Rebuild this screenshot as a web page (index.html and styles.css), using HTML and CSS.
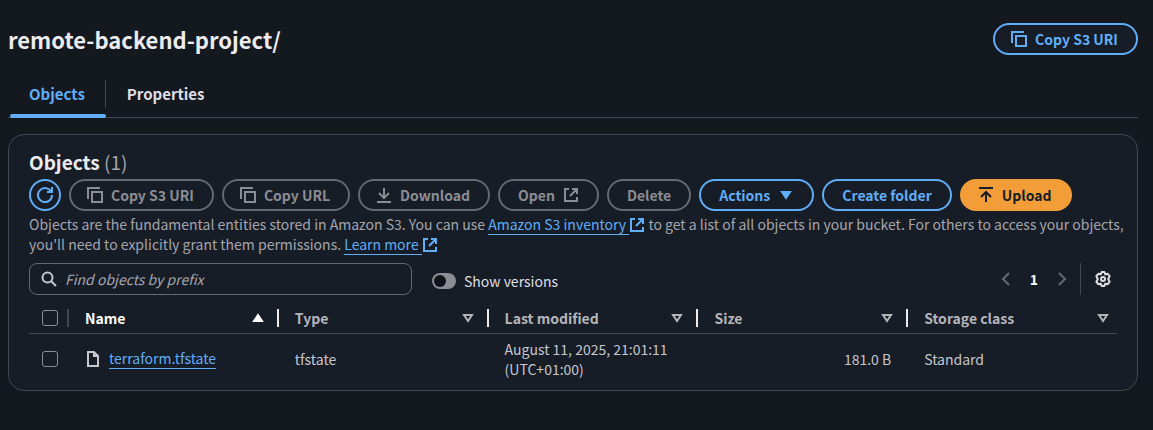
FILE: index.html
```html
<!DOCTYPE html>
<html lang="en">
<head>
<meta charset="utf-8">
<meta name="viewport" content="width=device-width, initial-scale=1">
<title>remote-backend-project/</title>
<link rel="stylesheet" href="styles.css">
</head>
<body>
<svg class="sprite" aria-hidden="true">
  <symbol id="i-copy" viewBox="0 0 16 16"><path d="M1 12V1h12M5 5h10v10H5z"/></symbol>
  <symbol id="i-external" viewBox="0 0 16 16"><path d="M6 2H2v12h12v-4M9 2h5v5M14 2 7 9"/></symbol>
</svg>
<main class="page">
  <header class="page-header">
    <h1 class="page-title">remote-backend-project/</h1>
    <button class="btn" type="button"><svg class="icon"><use href="#i-copy"/></svg>Copy S3 URI</button>
  </header>
  <nav class="tabs">
    <button class="tab tab-active" type="button">Objects</button>
    <button class="tab" type="button">Properties</button>
  </nav>
  <section class="panel">
    <h2 class="panel-title">Objects <span class="counter">(1)</span></h2>
    <div class="actions">
      <button class="btn btn-round" type="button" aria-label="Refresh"><svg class="icon" viewBox="0 0 16 16"><path d="M10 5h5V0M15 8a7 7 0 1 1-.7-3"/></svg></button>
      <button class="btn" type="button" disabled><svg class="icon"><use href="#i-copy"/></svg>Copy S3 URI</button>
      <button class="btn" type="button" disabled><svg class="icon"><use href="#i-copy"/></svg>Copy URL</button>
      <button class="btn" type="button" disabled><svg class="icon" viewBox="0 0 16 16"><path d="M1 15h14M8 1v10M3 6l5 5 5-5"/></svg>Download</button>
      <button class="btn btn-text" type="button" disabled>Open<svg class="icon"><use href="#i-external"/></svg></button>
      <button class="btn btn-text" type="button" disabled>Delete</button>
      <button class="btn btn-text" type="button">Actions<svg class="icon" viewBox="0 0 16 16"><path class="solid" d="M4 5h8l-4 6z"/></svg></button>
      <button class="btn btn-text" type="button">Create folder</button>
      <button class="btn btn-primary" type="button"><svg class="icon" viewBox="0 0 16 16"><path d="M1 1h14M8 15V5M3 10l5-5 5 5"/></svg>Upload</button>
    </div>
    <p class="description">Objects are the fundamental entities stored in Amazon S3. You can use <a class="link" href="#">Amazon S3 inventory </a><svg class="icon icon-link"><use href="#i-external"/></svg> to get a list of all objects in your bucket. For others to access your objects, you'll need to explicitly grant them permissions. <a class="link" href="#">Learn more </a><svg class="icon icon-link"><use href="#i-external"/></svg></p>
    <div class="filters">
      <label class="search">
        <svg class="icon" viewBox="0 0 16 16"><circle cx="6.500" cy="6.500" r="5"/><path d="m10.500 10.500 4.500 4.500"/></svg>
        <input class="search-input" type="search" placeholder="Find objects by prefix" aria-label="Find objects by prefix">
      </label>
      <label class="toggle"><input class="switch" type="checkbox" role="switch">Show versions</label>
      <div class="pager">
        <button class="icon-btn icon-btn-off" type="button" disabled aria-label="Previous page"><svg class="icon" viewBox="0 0 16 16"><path d="M11 2 5 8l6 6"/></svg></button>
        <button class="icon-btn page-number" type="button">1</button>
        <button class="icon-btn icon-btn-off" type="button" disabled aria-label="Next page"><svg class="icon" viewBox="0 0 16 16"><path d="m5 2 6 6-6 6"/></svg></button>
      </div>
      <button class="icon-btn settings" type="button" aria-label="Preferences"><svg class="icon" viewBox="0 0 16 16"><path stroke-linejoin="round" d="M6.600 1h2.800l.8 2.300 2.500-.5 1.900 2.400L13.200 8l1.400 2.800-1.900 2.400-2.500-.5L9.400 15H6.600l-.8-2.300-2.500.5-1.900-2.400L2.800 8 1.400 5.200l1.900-2.400 2.500.5z"/><circle cx="8" cy="8" r="2"/></svg></button>
    </div>
    <table class="objects">
      <thead>
        <tr>
          <th class="select" scope="col"><input class="check" type="checkbox" aria-label="Select all objects"></th>
          <th class="sorted" scope="col"><div class="head">Name<svg class="icon" viewBox="0 0 16 16"><path class="solid" d="M4 11h8L8 5z"/></svg></div></th>
          <th scope="col"><div class="head">Type<svg class="icon" viewBox="0 0 16 16"><path d="M4 5h8l-4 6z"/></svg></div></th>
          <th scope="col"><div class="head">Last modified<svg class="icon" viewBox="0 0 16 16"><path d="M4 5h8l-4 6z"/></svg></div></th>
          <th scope="col"><div class="head">Size<svg class="icon" viewBox="0 0 16 16"><path d="M4 5h8l-4 6z"/></svg></div></th>
          <th scope="col"><div class="head">Storage class<svg class="icon" viewBox="0 0 16 16"><path d="M4 5h8l-4 6z"/></svg></div></th>
        </tr>
      </thead>
      <tbody>
        <tr>
          <td class="select"><input class="check" type="checkbox" aria-label="Select terraform.tfstate"></td>
          <td><div class="file"><svg class="icon" viewBox="0 0 16 16"><path d="M3 1h6l4 4v10H3zM9 1v4h4"/></svg><a class="link" href="#">terraform.tfstate</a></div></td>
          <td>tfstate</td>
          <td>August 11, 2025, 21:01:11 (UTC+01:00)</td>
          <td class="number">181.0 B</td>
          <td>Standard</td>
        </tr>
      </tbody>
    </table>
  </section>
</main>
</body>
</html>
```
FILE: styles.css
```css
* { box-sizing: border-box; }
body {
  margin: 0;
  background: #14181f;
  color: #c6c6cd;
  font: 14px/20px "Noto Sans CJK SC", "Open Sans", sans-serif;
}
button, input { font: inherit; color: inherit; }
h1, h2, p { margin: 0; }
.sprite { display: none; }
.icon {
  width: 16px;
  height: 16px;
  flex: none;
  fill: none;
  stroke: currentColor;
  stroke-width: 2;
}
.solid { fill: currentColor; }
.page { padding: 23px 15px 0 8px; }
.page-header { display: flex; justify-content: space-between; align-items: center; }
.page-title { color: #ebebf0; font-size: 22px; line-height: 28px; }
.btn {
  display: inline-flex;
  align-items: center;
  gap: 8px;
  height: 32px;
  padding: 0 18px 0 16px;
  border: 2px solid #61adf7;
  border-radius: 16px;
  background: #161d26;
  color: #61adf7;
  font-weight: 700;
  white-space: nowrap;
}
.btn:disabled { border-color: #656871; color: #8c8c94; }
.btn-text { padding: 0 18px; }
.btn-round { width: 32px; padding: 0; justify-content: center; }
.btn-primary { border-color: #f29d38; background: #f29d38; color: #161d26; }
.tabs { display: flex; align-items: center; margin-top: 16px; height: 47px; border-bottom: 1px solid #424650; }
.tab {
  height: 47px;
  padding: 0 21px;
  border: 0;
  background: none;
  color: #dedee3;
  font-size: 15px;
  font-weight: 700;
}
.tab-active { position: relative; color: #61adf7; }
.tab-active::before { content: ""; position: absolute; right: 0; top: 9px; height: 28px; border-right: 1px solid #424650; }
.tab-active::after { content: ""; position: absolute; left: 2px; right: 0; bottom: 0; height: 4px; border-radius: 2px; background: #61adf7; }
.panel {
  margin-top: 16px;
  padding: 15px 20px 0;
  border: 1px solid #424650;
  border-radius: 16px;
  background: #161d26;
}
.panel-title { color: #ebebf0; font-size: 19px; line-height: 24px; }
.counter { color: #a4a4ad; font-weight: 400; }
.actions { display: flex; flex-wrap: wrap; gap: 8px; margin-top: 5px; }
.description { margin: 3px -12px 0 0; color: #a4a4ad; }
.link { color: #61adf7; text-decoration: none; border-bottom: 1px solid #61adf7; white-space: pre; }
.icon-link { color: #61adf7; vertical-align: -3px; }
.filters { display: flex; align-items: center; margin-top: 9px; }
.search {
  display: flex;
  align-items: center;
  gap: 8px;
  width: 383px;
  height: 32px;
  padding: 0 11px;
  border: 1px solid #656871;
  border-radius: 8px;
}
.search-input { flex: 1; min-width: 0; padding: 0; border: 0; outline: 0; background: none; }
.search-input::placeholder { color: #a4a4ad; font-style: italic; opacity: 1; }
.toggle { display: flex; align-items: center; gap: 8px; margin: 4px 0 0 20px; color: #dedee3; }
.switch {
  appearance: none;
  width: 24px;
  height: 16px;
  margin: 0;
  padding: 2px;
  border-radius: 8px;
  background: #8c8c94;
}
.switch::before { content: ""; display: block; width: 12px; height: 12px; border-radius: 50%; background: #0f141a; }
.pager { display: flex; gap: 12px; margin-left: auto; padding-right: 10px; }
.icon-btn { display: flex; align-items: center; justify-content: center; width: 16px; height: 32px; padding: 0; border: 0; background: none; color: #dedee3; }
.icon-btn-off { color: #656871; }
.page-number { color: #fff; font-weight: 700; }
.settings { width: 37px; padding-left: 8px; border-left: 1px solid #424650; }
.objects { width: 100%; table-layout: fixed; border-collapse: collapse; margin-top: 8px; }
.objects th { position: relative; height: 30px; padding: 0 12px 0 17px; border-bottom: 1px solid #424650; color: #b4b4bb; text-align: left; }
.objects th:last-child { padding-right: 6px; }
.objects th:not(:last-child)::after { content: ""; position: absolute; right: -1px; top: 6px; width: 2px; height: 18px; background: #ebebf0; }
.objects th.select:not(:last-child)::after { background: #424650; }
.objects th.sorted { color: #fff; }
.objects td { height: 57px; padding: 5px 16px 11px 17px; vertical-align: middle; }
.objects th.select, .objects td.select { width: 39px; padding-left: 13px; padding-right: 0; }
.head { display: flex; align-items: center; justify-content: space-between; }
.check {
  appearance: none;
  display: block;
  width: 16px;
  height: 16px;
  margin: 0;
  border: 1px solid #8c8c94;
  border-radius: 3px;
}
.file { display: flex; align-items: center; gap: 8px; }
.objects .number { text-align: right; }
```
